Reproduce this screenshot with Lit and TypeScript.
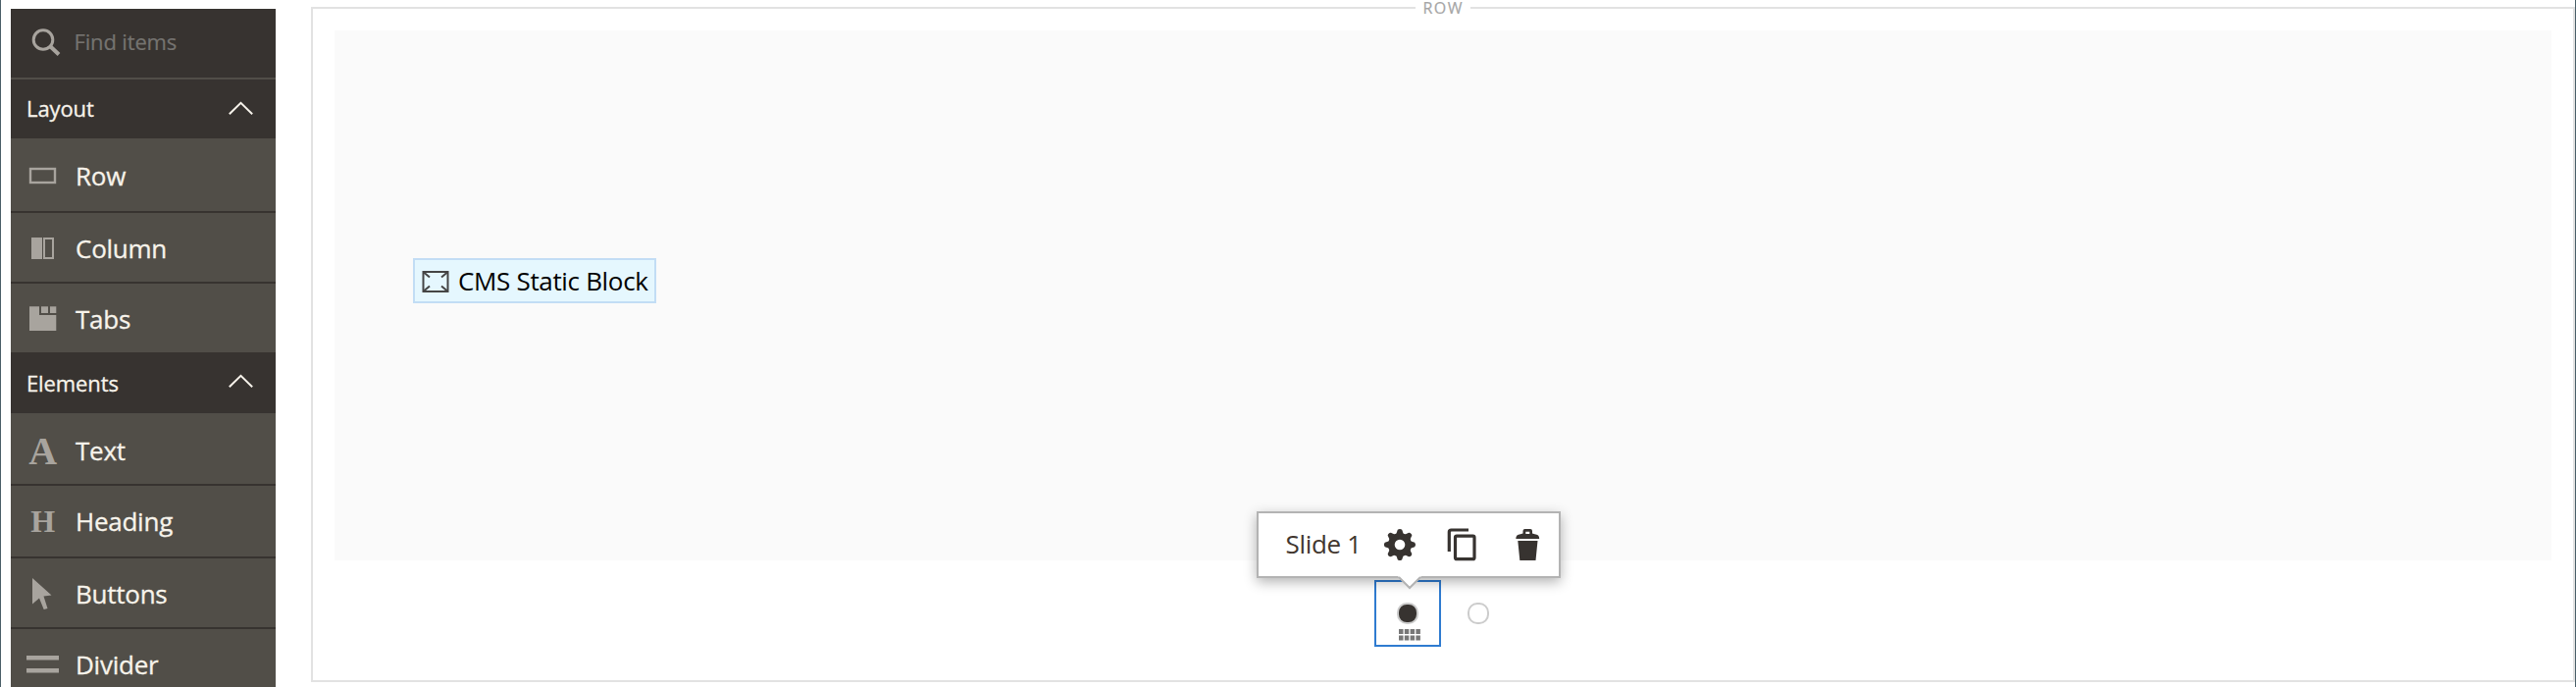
import { LitElement, html, css, svg } from "lit";
import { customElement } from "lit/decorators.js";

const icons: Record<string, unknown> = {
  Row: svg`<rect x="7" y="11" width="25" height="14" fill="none" stroke="#a8a49e" stroke-width="2.4"/>`,
  Column: svg`<rect x="8" y="7" width="11" height="22"/><rect x="21" y="8" width="9" height="20" fill="none" stroke="#a8a49e" stroke-width="2"/>`,
  Tabs: svg`<path d="M6 5.3h10v8.7h17.3v16H6z"/><rect x="18" y="5.3" width="7" height="6.7"/><rect x="27" y="5.3" width="6.3" height="6.7"/>`,
  Text: svg`<text x="19.7" y="31.5" text-anchor="middle" font-size="40">A</text>`,
  Heading: svg`<text x="19.8" y="28.5" text-anchor="middle" font-size="32">H</text>`,
  Buttons: svg`<path d="M9 2L28.5 19.5L20.5 20.5L24.5 33L20.7 34L16 22.5L9 28.5z"/>`,
  Divider: svg`<rect x="3" y="9" width="33" height="4.5"/><rect x="3" y="22" width="33" height="4.5"/>`,
};

const groups = [
  { title: "Layout", items: ["Row", "Column", "Tabs"] },
  { title: "Elements", items: ["Text", "Heading", "Buttons", "Divider"] },
];

@customElement("builder-sidebar")
class BuilderSidebar extends LitElement {
  static styles = css`
    :host { display: block; width: 270px; background: #373330; color: #f7f3eb; overflow: hidden; }
    svg { display: block; flex: none; overflow: visible; }
    .search { display: flex; height: 70px; border-bottom: 2px solid #514e48; color: #757370; font-size: 22px; line-height: 30px; letter-spacing: -.15px; }
    .search svg { margin: 17px 0 0 18px; }
    .search span { margin: 18px 0 0 6.5px; -webkit-text-stroke: .2px; }
    .head { display: flex; justify-content: space-between; height: 60px; padding: 0 23px 0 16px; font-size: 22px; line-height: 30px; letter-spacing: -.1px; box-sizing: border-box; }
    .head span { padding-top: 14px; -webkit-text-stroke: .3px; }
    .head svg { margin-top: 22px; }
    .elements .head { height: 62px; padding-top: 2px; }
    .elements .head svg { margin-top: 20px; }
    .item { display: flex; gap: 13px; height: 70px; padding: 18px 0 0 13px; box-sizing: border-box; background: #514e48; margin-bottom: 2px; font-size: 26px; line-height: 36px; letter-spacing: -.25px; }
    .item span { -webkit-text-stroke: .3px; }
    .item svg { fill: #a8a49e; font: bold 32px "Liberation Serif", serif; letter-spacing: 0; }
    .item:last-child { margin-bottom: 0; }
    .item.Row { height: 74px; padding-top: 20px; }
    .item.Text { height: 72px; padding-top: 20px; }
    .item.Heading { height: 72px; }
  `;
  render() {
    return html`
      <div class="search">
        <svg width="40" height="40" viewBox="0 0 40 40" fill="none" stroke="#a8a49e"><circle cx="15" cy="14.5" r="9.8" stroke-width="3"/><path d="M22 21L31 29.5" stroke-width="4"/></svg>
        <span>Find items</span>
      </div>
      ${groups.map((g) => html`<section class=${g.title.toLowerCase()}>
        <div class="head"><span>${g.title}</span>
          <svg width="25" height="14" viewBox="0 0 25 14" fill="none" stroke="#f7f3eb" stroke-width="2"><path d="M.8 13.2L12.5 1.8L24.2 13.2"/></svg></div>
        ${g.items.map((n) => html`<div class="item ${n}"><svg width="40" height="36" viewBox="0 0 40 36">${icons[n]}</svg><span>${n}</span></div>`)}
      </section>`)}
    `;
  }
}

@customElement("builder-stage")
class BuilderStage extends LitElement {
  static styles = css`
    :host { display: flex; flex-direction: column; position: relative; box-sizing: border-box; border: 2px solid #e2e2e2; padding: 22px; background: #fff; }
    .legend { position: absolute; top: -9px; left: 50%; transform: translateX(-50%); margin-left: -.5px; background: #fff; padding: 0 6.5px 0 8px; font-size: 16px; line-height: 16px; letter-spacing: 1.5px; color: #a6a6a6; -webkit-text-stroke: .2px; }
    .slide { height: 540px; box-sizing: border-box; background: #fafafa; padding: 232px 80px 0; display: flex; align-items: flex-start; }
    .block { display: flex; box-sizing: border-box; height: 46px; width: 248px; border: 2px solid #c2ddf5; background: #e5f7fe; padding: 3px 0 0 7px; font-size: 26px; line-height: 36px; letter-spacing: -.33px; color: #000; white-space: nowrap; }
    .block svg { margin: 7px 9px 0 0; flex: none; }
    .dots { display: flex; justify-content: center; padding: 20px 1px 0 0; }
    .dot { position: relative; width: 68px; height: 68px; box-sizing: border-box; display: flex; flex-direction: column; align-items: center; padding-top: 23px; }
    .dot + .dot { margin-left: 4px; }
    .dot.active { border: 2px solid #2f7bd0; padding-top: 21px; }
    .mark { width: 22px; height: 22px; box-sizing: border-box; border: 2px solid #ccc; border-radius: 10px; }
    .active .mark { background: #373330; }
    .grip { margin: 5px 0 0 4px; }
    .tip { position: absolute; left: -122px; top: -72px; width: 310px; height: 68px; box-sizing: border-box; border: 2px solid #b3b3b3; background: #fff; box-shadow: 0 4px 12px rgba(0,0,0,.3); display: flex; color: #41362f; font-size: 26px; line-height: 36px; letter-spacing: -.3px; z-index: 2; }
    .tip span { width: 100px; padding: 12.5px 0 0 28px; white-space: nowrap; }
    .tip .tools { flex: none; }
    .arrow { position: absolute; left: 142px; top: 64px; }
  `;
  render() {
    return html`
      <div class="legend">ROW</div>
      <div class="slide">
        <div class="block">
          <svg width="28" height="24" viewBox="0 0 28 24" fill="none" stroke="#454545" stroke-width="2"><rect x="1.5" y="2" width="25" height="20"/><path d="M2 2.5L8 7.5M26 2.5L20 7.5M2 21.5L8 16.5M26 21.5L20 16.5"/></svg>
          <span>CMS Static Block</span>
        </div>
      </div>
      <div class="dots">
        <div class="dot active">
          <div class="mark"></div>
          <svg class="grip" width="22" height="12" viewBox="0 0 22 12" fill="#777">${[0, 5.8, 11.6, 17.4].map((x) => svg`<rect x=${x} y="0" width="4.5" height="5"/><rect x=${x} y="6.5" width="4.5" height="5"/>`)}</svg>
          <div class="tip">
            <span>Slide 1</span>
            <svg class="tools" width="178" height="64" viewBox="0 0 178 64" fill="#373330">
              <g transform="translate(16 32)"><circle r="12"/>${[0, 45, 90, 135, 180, 225, 270, 315].map((a) => svg`<path d="M-4-10L-2.2-15.2Q0-17 2.2-15.2L4-10z" transform=${`rotate(${a})`}/>`)}<circle r="5.3" fill="#fff"/></g>
              <path d="M66.3 39V19Q66.3 17 68.5 17H86" fill="none" stroke="#373330" stroke-width="3.2"/>
              <rect x="72.5" y="23.2" width="19.5" height="23.5" rx="1.5" fill="none" stroke="#373330" stroke-width="3.2"/>
              <path d="M134.3 26Q134.3 21.5 139 21.2L141.5 20.5V18Q141.5 16 143.5 16H149Q151 16 151 18V20.5L153.5 21.2Q158.2 21.5 158.2 26zM144.3 18.7V21H148.3V18.7zM136.3 28H156.5L154.5 48H138.3z" fill-rule="evenodd"/>
            </svg>
            <svg class="arrow" width="24" height="14" viewBox="0 0 24 14"><path d="M0 0H24L12 12z" fill="#fff"/><path d="M1 1L12 12L23 1" fill="none" stroke="#b3b3b3" stroke-width="2"/></svg>
          </div>
        </div>
        <div class="dot"><div class="mark"></div></div>
      </div>
    `;
  }
}

@customElement("app-root")
class AppRoot extends LitElement {
  static styles = css`
    :host { display: flex; box-sizing: border-box; height: 700px; overflow: hidden; background: #fff; border: solid #4a5f68; border-width: 0 1px; font-family: "Open Sans", "Noto Sans", sans-serif; }
    builder-sidebar { margin: 9px 0 0 10px; flex: none; }
    builder-stage { margin: 7px 0 0 36px; flex: 1; height: 688px; }
  `;
  render() {
    return html`<builder-sidebar></builder-sidebar><builder-stage></builder-stage>`;
  }
}
